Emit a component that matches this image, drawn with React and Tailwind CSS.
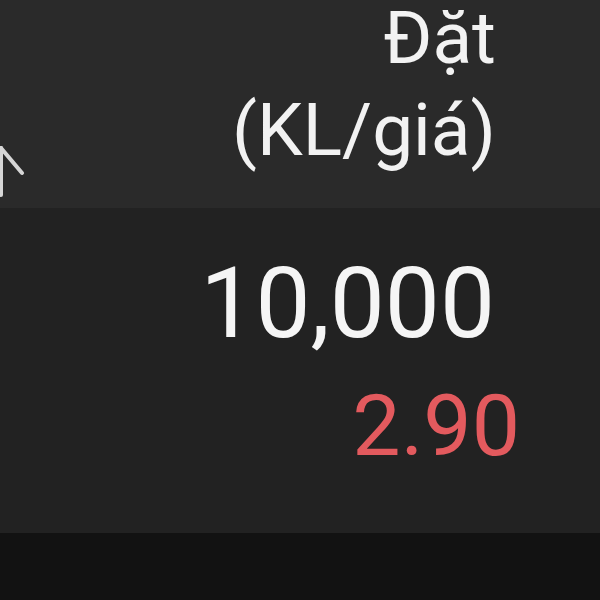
import React from 'react';

const ArrowUp = () => (
  <svg width="44" height="60" viewBox="0 0 44 60" fill="none" stroke="#d6d6d6" strokeWidth="4" strokeLinecap="round" strokeLinejoin="round" className="absolute left-[-19px] top-[144px]">
    <path d="M20 4 L20 51" />
    <path d="M20 4 L41 29" />
    <path d="M20 4 L-1 29" />
  </svg>
);

export default function App() {
  return (
    <div className="relative w-[600px] h-[600px] overflow-hidden bg-[#121212] font-['Roboto',sans-serif]">
      <ArrowUp />
      <div className="h-[208px] bg-[#2a2a2a] flex flex-col items-end pr-[104px] text-[73px] text-[#f2f2f2]">
        <span className="leading-[76px]">Đặt</span>
        <span className="leading-[108px]">(KL/giá)</span>
      </div>
      <div className="h-[325px] bg-[#222222] flex flex-col items-end pt-[40px]">
        <span className="pr-[105px] text-[98px] leading-[112px] text-[#f5f5f5]">10,000</span>
        <span className="pr-[80px] pt-[16px] text-[86px] leading-[100px] text-[#e35a5e]">2.90</span>
      </div>
    </div>
  );
}
